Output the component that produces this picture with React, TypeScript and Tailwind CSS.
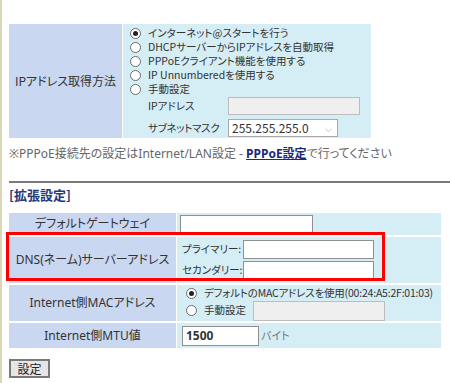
const Radio = ({ checked }: { checked?: boolean }) => (
  <span className="flex h-[11px] w-[11px] shrink-0 items-center justify-center rounded-full border border-[#6b6b6b] bg-white">
    {checked && <span className="h-[5px] w-[5px] rounded-full bg-[#222]" />}
  </span>
);

const RadioRow = ({ label, checked }: { label: string; checked?: boolean }) => (
  <div className="flex h-[14px] items-center gap-[7px]">
    <Radio checked={checked} />
    <span>{label}</span>
  </div>
);

const TextBox = ({ className, disabled, value }: { className: string; disabled?: boolean; value?: string }) => (
  <div
    className={`flex shrink-0 items-center border px-[3px] ${
      disabled ? "border-[#bdbdbd] bg-[#efefef]" : "border-[#8f8f8f] bg-white"
    } ${className}`}
  >
    {value}
  </div>
);

const App = () => {
  const options = [
    { label: "インターネット@スタートを行う", checked: true },
    { label: "DHCPサーバーからIPアドレスを自動取得" },
    { label: "PPPoEクライアント機能を使用する" },
    { label: "IP Unnumberedを使用する" },
    { label: "手動設定" },
  ];

  const wide = "font-['Noto_Sans','Noto_Sans_CJK_JP',sans-serif]";

  return (
    <main className="relative min-h-[383px] w-[450px] overflow-hidden whitespace-nowrap border-l-2 border-[#d9d7b6] bg-white pl-[7px] pt-[24px] font-['Noto_Sans_CJK_JP',sans-serif] text-[11px] leading-none text-[#333] [font-feature-settings:'palt']">
      {/* IPアドレス取得方法 */}
      <section className="grid w-[362px] grid-cols-[113px_248px] gap-x-[1px]">
        <div className="flex items-center justify-center bg-[#c9d7f1] text-[12px]">IPアドレス取得方法</div>
        <div className="bg-[#d5edf5] pb-[1px] pl-[7px] pt-[2px] text-[10.5px]">
          {options.map((o) => (
            <RadioRow key={o.label} label={o.label} checked={o.checked} />
          ))}
          <div className="mt-[1px] flex h-[18px] items-center">
            <span className="w-[98px] shrink-0 pl-[18px]">IPアドレス</span>
            <TextBox disabled className="h-[18px] w-[132px]" />
          </div>
          <div className="mt-[4px] flex h-[18px] items-center">
            <span className="w-[98px] shrink-0 pl-[18px] tracking-[-0.3px]">サブネットマスク</span>
            <div className="flex h-[18px] w-[110px] items-center justify-between border border-[#a9a9a9] bg-white pl-[3px] pr-[5px] text-[12px]">
              <span>255.255.255.0</span>
              <span className="text-[9px] text-[#999]">⌵</span>
            </div>
          </div>
        </div>
      </section>

      <p className={`mt-[10px] text-[12px] text-[#666] ${wide}`}>
        ※PPPoE接続先の設定はInternet/LAN設定 -{" "}
        <a className="font-bold text-[#1c2a78] underline">PPPoE設定</a>で行ってください
      </p>

      <hr className="mt-[21px] border-t-2 border-[#7a7a7a]" />

      <h2 className="mt-[5px] text-[13px] font-bold text-[#25397a]">[拡張設定]</h2>

      {/* 拡張設定 */}
      <section className={`mt-[12px] grid w-[432px] grid-cols-[167px_264px] gap-x-[1px] gap-y-[2px] text-[12px] ${wide}`}>
        <div className="flex h-[22px] items-center justify-center bg-[#c9d7f1]">デフォルトゲートウェイ</div>
        <div className="flex items-center bg-[#d5edf5] pl-[3px]">
          <TextBox className="h-[19px] w-[133px]" />
        </div>

        <div className="flex h-[46px] items-center justify-center bg-[#c9d7f1]">DNS(ネーム)サーバーアドレス</div>
        <div className="flex flex-col justify-center gap-[2px] bg-[#d5edf5] pl-[5px] font-['Noto_Sans_CJK_JP',sans-serif] text-[10.5px]">
          <div className="flex items-center">
            <span className="w-[61px] shrink-0">プライマリー:</span>
            <TextBox className="h-[19px] w-[131px]" />
          </div>
          <div className="flex items-center">
            <span className="w-[61px] shrink-0">セカンダリー:</span>
            <TextBox className="h-[19px] w-[131px]" />
          </div>
        </div>

        <div className="flex h-[36px] items-center justify-center bg-[#c9d7f1]">Internet側MACアドレス</div>
        <div className="flex flex-col justify-center bg-[#d5edf5] pl-[9px] font-['Noto_Sans_CJK_JP',sans-serif] text-[10.5px]">
          <div className="flex h-[15px] items-center gap-[7px]">
            <Radio checked />
            <span className="tracking-[-0.2px]">デフォルトのMACアドレスを使用(00:24:A5:2F:01:03)</span>
          </div>
          <div className="flex h-[20px] items-center gap-[7px]">
            <Radio />
            <span>手動設定</span>
            <TextBox disabled className="h-[20px] w-[132px]" />
          </div>
        </div>

        <div className="flex h-[25px] items-center justify-center bg-[#c9d7f1]">Internet側MTU値</div>
        <div className="flex items-center bg-[#d5edf5] pl-[5px]">
          <TextBox value="1500" className="h-[20px] w-[77px] font-bold" />
          <span className="ml-[2px] font-['Noto_Sans_CJK_JP',sans-serif] text-[11px] text-[#777]">バイト</span>
        </div>
      </section>

      <button className="mt-[11px] h-[19px] w-[41px] border-2 border-[#7a7a7a] bg-[#e6e6e6] text-[12px] text-[#222]">
        設定
      </button>

      {/* 注目枠 */}
      <div className="pointer-events-none absolute left-[4px] top-[232px] h-[49px] w-[379px] border-[3px] border-[#ff0000]" />
    </main>
  );
};

export default App;
